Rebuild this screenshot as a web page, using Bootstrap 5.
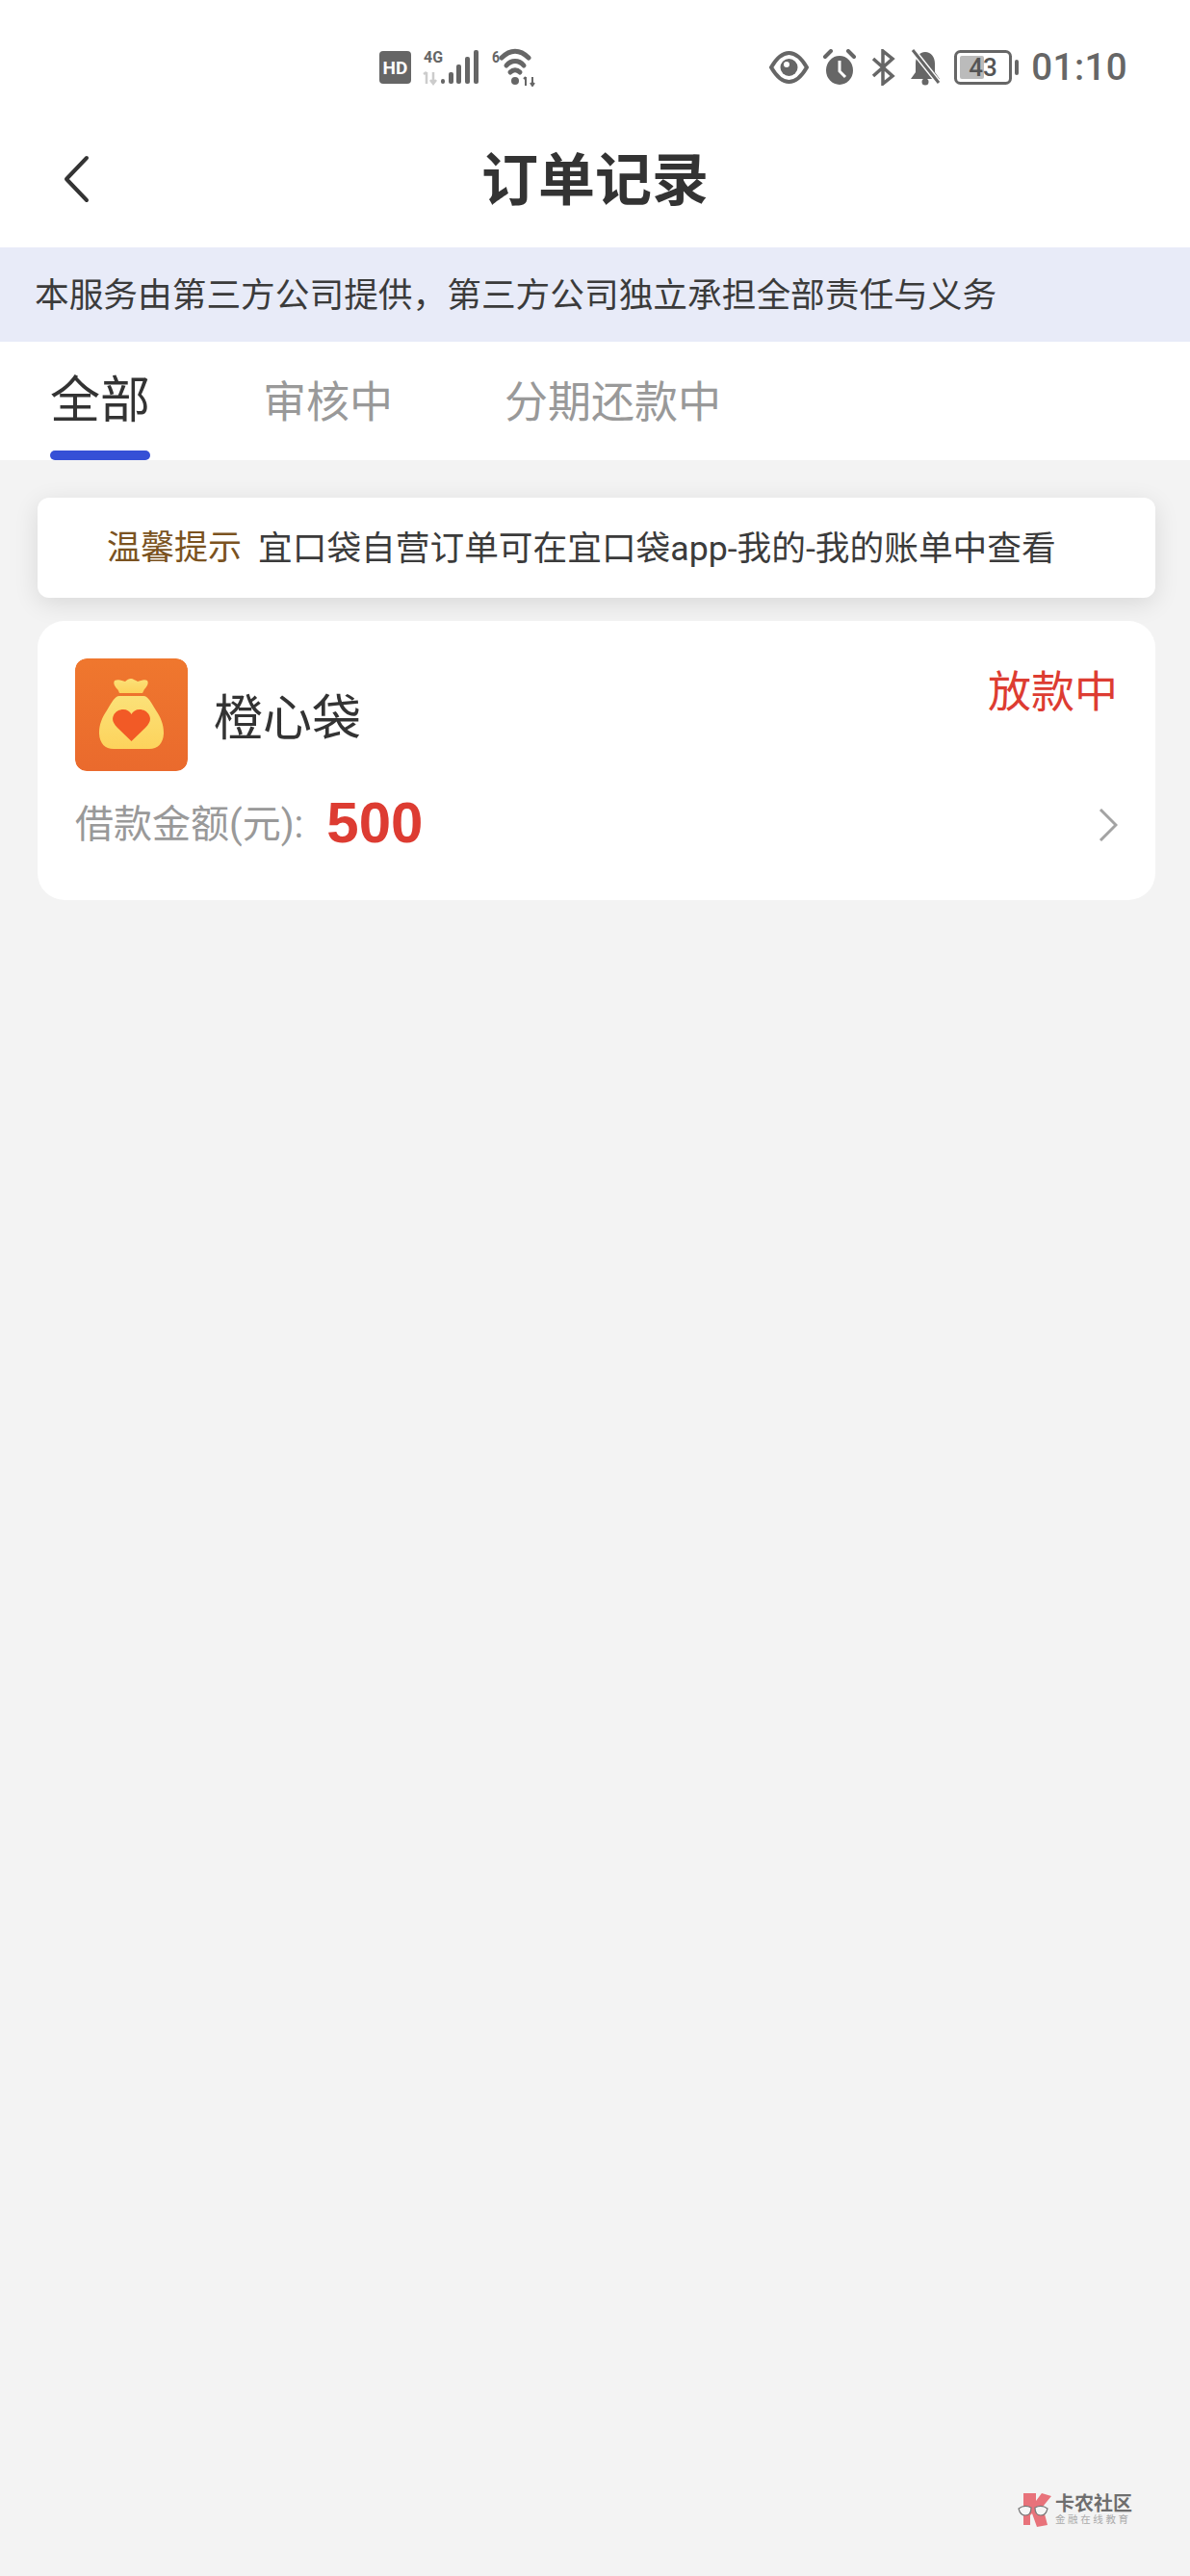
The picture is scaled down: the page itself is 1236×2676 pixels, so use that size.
<!DOCTYPE html>
<html lang="zh-CN">
<head>
    <meta charset="UTF-8">
    <meta name="viewport" content="width=device-width, initial-scale=1.0">
    <title>订单记录</title>
    <link href="https://cdn.jsdelivr.net/npm/bootstrap@5.3.3/dist/css/bootstrap.min.css" rel="stylesheet">
    <style>
        body {
            background-color: #f3f3f3;
            font-family: "Roboto", "Noto Sans CJK SC", sans-serif;
            color: #333;
            min-height: 2676px;
            position: relative;
        }
        .status-row {
            height: 130px;
            padding: 10px 65px 0 394px;
            color: #666;
        }
        .status-row svg { display: block; flex: none; }
        .status-left { gap: 12px; }
        .status-right { margin-left: auto; gap: 14px; }
        .clock-text { font-size: 38.500px; font-weight: 500; line-height: 1; margin-left: 12px; letter-spacing: .4px; }
        .title-row { height: 127px; position: relative; }
        .title-row h1 { font-size: 59px; font-weight: 700; margin: 0 0 12px; line-height: 1; color: #333; }
        .back-btn { position: absolute; left: 65px; top: 31px; }
        .third-banner {
            background: #e8ebf8;
            height: 98px;
            padding: 4px 0 0 36px;
            font-size: 35.700px;
            color: #3b3b3b;
        }
        .tab-row { height: 123px; padding-left: 52px; }
        .tab-item { color: #999; font-size: 45px; line-height: 1; padding-top: 41px; position: relative; }
        .tab-item.is-on { color: #333; font-size: 52px; padding-top: 36px; margin-right: 117px; }
        .tab-item.is-on::after {
            content: "";
            position: absolute;
            left: 0; right: 0; bottom: 0;
            height: 10px;
            border-radius: 5px;
            background: #3550d6;
        }
        .tab-item.second { margin-right: 116px; }
        .page-body { padding: 39px 36px 0 39px; }
        .tip-box {
            height: 104px;
            background: #fff;
            border-radius: 12px;
            box-shadow: 0 6px 26px rgba(0, 0, 0, .11);
            padding: 3px 0 0 72px;
            font-size: 35.700px;
            margin-bottom: 24px;
            color: #3b3b3b;
        }
        .tip-label { color: #7a5220; font-size: 35px; margin-right: 17px; }
        .loan-card {
            height: 290px;
            background: #fff;
            border-radius: 28px;
            padding: 39px 39px 0;
            position: relative;
        }
        .app-icon { width: 117px; height: 117px; border-radius: 12px; display: block; }
        .app-name { font-size: 51px; margin: 8px 0 0 27px; line-height: 1; color: #333; }
        .loan-state { font-size: 45px; color: #dd3c32; line-height: 1; margin-left: auto; margin-top: 13px; }
        .amount-row { margin-top: 21px; height: 70px; }
        .amount-label { font-size: 40px; color: #999; line-height: 1; }
        .amount-num { font-family: "Liberation Sans", sans-serif; font-size: 60px; font-weight: 700; color: #dd3c32; line-height: 1; margin: -4px 0 0 24px; }
        .go-arrow { margin-left: auto; }
        .wm-logo {
            position: absolute;
            left: 1057px;
            top: 2589px;
            color: #6e6e6e;
            gap: 3px;
        }
        .wm-main { font-size: 20px; font-weight: 700; line-height: 21px; white-space: nowrap; }
        .wm-sub { font-size: 10.500px; line-height: 12px; color: #aaa; white-space: nowrap; letter-spacing: 2.600px; }
    </style>
</head>
<body>
    <div class="bg-white">
        <!-- status bar -->
        <div class="status-row d-flex align-items-center">
            <div class="status-left d-flex align-items-center">
                <svg width="33" height="34" viewBox="0 0 33 34"><rect width="33" height="34" rx="4" fill="#666"/><text x="16.500" y="24" text-anchor="middle" font-family="Roboto" font-weight="700" font-size="19" fill="#fff">HD</text></svg>
                <svg width="60" height="40" viewBox="0 0 60 40">
                    <text x="1" y="15" font-family="Roboto" font-weight="700" font-size="17" textLength="20" lengthAdjust="spacingAndGlyphs" fill="#666">4G</text>
                    <path d="M4 25v12M1 27l3-2M11 25v12M8 33l3 4 3-4" fill="none" stroke="#ccc" stroke-width="2.500"/>
                    <rect x="19" y="32" width="4" height="5" rx="2" fill="#666"/><rect x="27" y="25" width="5" height="12" rx="2" fill="#666"/><rect x="35" y="17" width="5" height="20" rx="2" fill="#666"/><rect x="44" y="9" width="5" height="28" rx="2" fill="#666"/><rect x="53" y="2" width="5" height="35" rx="2" fill="#666"/>
                </svg>
                <svg width="50" height="40" viewBox="0 0 50 40" fill="none" stroke="#666" stroke-width="5" stroke-linecap="round">
                    <text x="0" y="15" font-family="Roboto" font-weight="700" font-size="17" textLength="8" lengthAdjust="spacingAndGlyphs" fill="#666" stroke="none">6</text>
                    <path d="M10 10C19 1 29 1 38 10"/><path d="M15 18C20 12 28 12 33 18"/><path d="M19 25c3-3 7-3 10 0"/>
                    <circle cx="24" cy="34" r="4" fill="#666" stroke="none"/>
                    <path d="M35 30v9M33 32l2-2M42 30v9M40 36l2 3 2-3" stroke-width="2" stroke-linecap="butt"/>
                </svg>
            </div>
            <div class="status-right d-flex align-items-center">
                <svg width="41" height="34" viewBox="0 0 41 34"><path d="M2 17C9 5 15 2 20.500 2S32 5 39 17C32 29 26 32 20.500 32S9 29 2 17Z" fill="none" stroke="#666" stroke-width="4"/><circle cx="20.500" cy="17" r="9" fill="#666"/><circle cx="18" cy="14" r="3" fill="#fff"/></svg>
                <svg width="36" height="38" viewBox="0 0 36 38"><ellipse cx="18" cy="22" rx="14" ry="15" fill="#666"/><path d="M18 12v11l6 6" fill="none" stroke="#fff" stroke-width="3"/><path d="M3 8l6-6M33 8l-6-6" stroke="#666" stroke-width="4" stroke-linecap="round"/></svg>
                <svg width="27" height="38" viewBox="0 0 27 38" fill="none" stroke="#666" stroke-width="3.500"><path d="M3 10l20 18-10 8V2l10 8L3 28"/></svg>
                <svg width="32" height="38" viewBox="0 0 32 38"><path d="M16 3c6 0 10 5 10 12v9l5 7H1l5-7v-9C6 8 10 3 16 3Z" fill="#666"/><circle cx="16" cy="34" r="3.500" fill="#666"/><path d="M3 1l27 34" stroke="#fff" stroke-width="6"/><path d="M3 1l27 34" stroke="#666" stroke-width="3"/></svg>
                <svg width="68" height="36" viewBox="0 0 68 36"><rect x="1.500" y="1.500" width="57" height="33" rx="5" fill="none" stroke="#666" stroke-width="3"/><rect x="6" y="6" width="25" height="24" rx="2" fill="#bbb"/><rect x="63" y="10" width="4" height="16" rx="2" fill="#666"/><text x="30" y="27" text-anchor="middle" font-family="Roboto" font-weight="500" font-size="26" fill="#555">43</text></svg>
            </div>
            <span class="clock-text">01:10</span>
        </div>
        <!-- title -->
        <div class="title-row d-flex align-items-center justify-content-center">
            <svg class="back-btn" width="30" height="50" viewBox="0 0 30 50" fill="none" stroke="#333" stroke-width="4" stroke-linecap="round" stroke-linejoin="round"><path d="M25 3L4 25l21 22"/></svg>
            <h1>订单记录</h1>
        </div>
    </div>

    <div class="third-banner d-flex align-items-center">本服务由第三方公司提供，第三方公司独立承担全部责任与义务</div>

    <div class="tab-row bg-white d-flex">
        <div class="tab-item is-on">全部</div>
        <div class="tab-item second">审核中</div>
        <div class="tab-item">分期还款中</div>
    </div>

    <div class="page-body">
        <div class="tip-box d-flex align-items-center">
            <span class="tip-label">温馨提示</span>
            <span>宜口袋自营订单可在宜口袋app-我的-我的账单中查看</span>
        </div>

        <div class="loan-card">
            <div class="d-flex align-items-start">
                <svg class="app-icon" viewBox="0 0 117 117">
                    <defs>
                        <linearGradient id="bgOrange" x1="0" y1="0" x2="0" y2="1"><stop offset="0" stop-color="#ef772e"/><stop offset="1" stop-color="#ea6a2d"/></linearGradient>
                        <linearGradient id="bagYellow" x1="0" y1="0" x2="0" y2="1"><stop offset="0" stop-color="#fbe178"/><stop offset="1" stop-color="#fdd35c"/></linearGradient>
                    </defs>
                    <rect width="117" height="117" rx="12" fill="url(#bgOrange)"/>
                    <path d="M41 23c4-2 8 0 11 1 2-2 4-3 6-3s5 2 7 3c3-1 7-3 10-1 2 3-1 7-3 9-1 2-2 4-2 4H46s-1-3-2-4c-2-2-5-6-3-9Z" fill="url(#bagYellow)"/>
                    <path d="M46 39h25c5 0 8 7 13 15 5 7 8 15 8 23 0 11-6 17-15 17H40c-9 0-15-6-15-17 0-8 3-16 8-23 5-8 8-15 13-15Z" fill="url(#bagYellow)"/>
                    <path d="M58.500 86L44 72c-5-5-6-9-4-13 2-4 6-6 10-6 4 0 7 2 8.500 5 1.500-3 4.500-5 8.500-5 4 0 8 2 10 6 2 4 1 8-4 13Z" fill="#f25a26"/>
                </svg>
                <span class="app-name align-self-center">橙心袋</span>
                <span class="loan-state">放款中</span>
            </div>
            <div class="amount-row d-flex align-items-center">
                <span class="amount-label">借款金额(元):</span>
                <span class="amount-num">500</span>
                <svg class="go-arrow" width="20" height="34" viewBox="0 0 20 34" fill="none" stroke="#a3a3a3" stroke-width="3"><path d="M2 1l16 16L2 33"/></svg>
            </div>
        </div>
    </div>

    <div class="wm-logo d-flex align-items-center">
        <svg width="36" height="36" viewBox="0 0 36 36">
            <path d="M6 1h13v8l6-8 10 3-9 11 5 19-11 2-5-14-2 2v10H6Z" fill="#e8727a"/>
            <path d="M1 17c4-3 9-3 13-1 0 5-2 8-6 8-4 0-6-3-7-7ZM18 16c4-2 9-2 13 1-1 4-3 7-7 7-4 0-6-3-6-8Z" fill="#f6f6f6" stroke="#777" stroke-width="1.200"/>
        </svg>
        <div>
            <div class="wm-main">卡农社区</div>
            <div class="wm-sub">金融在线教育</div>
        </div>
    </div>

    <script src="https://cdn.jsdelivr.net/npm/bootstrap@5.3.3/dist/js/bootstrap.bundle.min.js"></script>
</body>
</html>
